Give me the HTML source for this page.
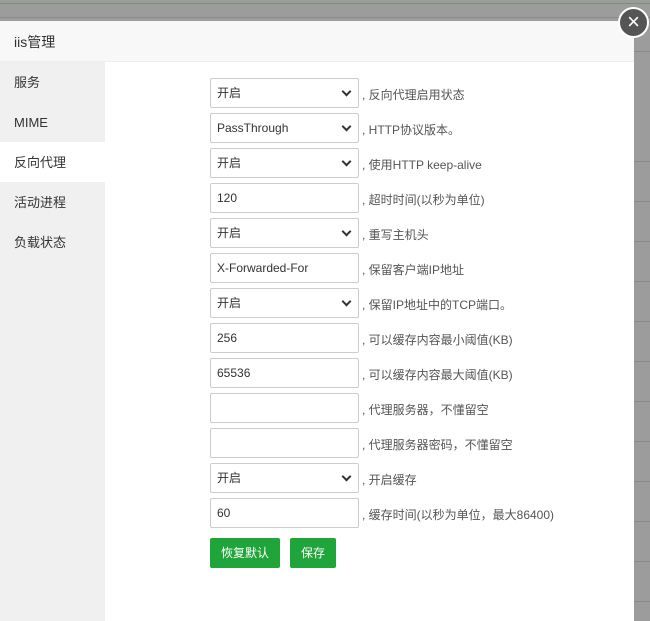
<!DOCTYPE html>
<html><head><meta charset="utf-8"><style>
*{box-sizing:border-box;margin:0;padding:0}
body{width:650px;height:613px;overflow:hidden;background:#9c9c9c;font-family:"Liberation Sans","Noto Sans CJK SC",sans-serif;font-size:12px;color:#333;position:relative}
.ln{position:absolute;left:0;right:0;height:1px;background:#8a8a8a}
.dlg{position:absolute;left:0;top:21px;width:634px;height:600px;background:#fff}
.hd{height:41px;background:#f8f8f8;border-bottom:1px solid #eee;font-size:14px;line-height:42px;padding-left:14px;color:#333}
.sb{position:absolute;left:0;top:41px;width:105px;bottom:0;background:#f0f0f0}
.sb div{height:40px;line-height:42px;padding-left:14px;font-size:13px;color:#333}
.sb .on{background:#fff}
.row{position:absolute;left:210px;height:30px;display:flex;align-items:center}
.f{width:149px;height:30px;border:1px solid #ccc;border-radius:2px;padding-left:6px;line-height:29px;font-size:12px;position:relative;color:#333;background:#fff}
.f.s:after{content:"";position:absolute;right:8px;top:9px;width:5px;height:5px;border-right:2px solid #333;border-bottom:2px solid #333;transform:rotate(45deg)}
.l{margin-left:3px;font-size:12px;color:#555;padding-top:2px}
.btn{position:absolute;top:538px;height:30px;background:#20a53a;color:#fff;border-radius:2px;line-height:30px;text-align:center;font-size:12px}
.x{position:absolute;left:618px;top:7px;width:31px;height:31px;border-radius:50%;background:#555;border:2px solid #fff;color:#fff;text-align:center;line-height:26px;font-size:22px}
</style></head><body>
<div class="ln" style="top:3px;background:#7d8f7a"></div>
<div class="ln" style="top:17px"></div>
<div class="dlg"><div class="hd">iis管理</div>
<div class="sb"><div>服务</div><div>MIME</div><div class="on">反向代理</div><div>活动进程</div><div>负载状态</div></div></div>
<div class="ln" style="top:51px;left:634px"></div>
<div class="ln" style="top:161px;left:634px"></div>
<div class="ln" style="top:201px;left:634px"></div>
<div class="ln" style="top:241px;left:634px"></div>
<div class="ln" style="top:281px;left:634px"></div>
<div class="ln" style="top:321px;left:634px"></div>
<div class="ln" style="top:361px;left:634px"></div>
<div class="ln" style="top:401px;left:634px"></div>
<div class="ln" style="top:441px;left:634px"></div>
<div class="ln" style="top:481px;left:634px"></div>
<div class="ln" style="top:521px;left:634px"></div>
<div class="ln" style="top:561px;left:634px"></div>
<div class="ln" style="top:601px;left:634px"></div>
<div class="row" style="top:78px"><div class="f s">开启</div><span class="l">, 反向代理启用状态</span></div>
<div class="row" style="top:113px"><div class="f s">PassThrough</div><span class="l">, HTTP协议版本。</span></div>
<div class="row" style="top:148px"><div class="f s">开启</div><span class="l">, 使用HTTP keep-alive</span></div>
<div class="row" style="top:183px"><div class="f">120</div><span class="l">, 超时时间(以秒为单位)</span></div>
<div class="row" style="top:218px"><div class="f s">开启</div><span class="l">, 重写主机头</span></div>
<div class="row" style="top:253px"><div class="f">X-Forwarded-For</div><span class="l">, 保留客户端IP地址</span></div>
<div class="row" style="top:288px"><div class="f s">开启</div><span class="l">, 保留IP地址中的TCP端口。</span></div>
<div class="row" style="top:323px"><div class="f">256</div><span class="l">, 可以缓存内容最小阈值(KB)</span></div>
<div class="row" style="top:358px"><div class="f">65536</div><span class="l">, 可以缓存内容最大阈值(KB)</span></div>
<div class="row" style="top:393px"><div class="f"></div><span class="l">, 代理服务器，不懂留空</span></div>
<div class="row" style="top:428px"><div class="f"></div><span class="l">, 代理服务器密码，不懂留空</span></div>
<div class="row" style="top:463px"><div class="f s">开启</div><span class="l">, 开启缓存</span></div>
<div class="row" style="top:498px"><div class="f">60</div><span class="l">, 缓存时间(以秒为单位，最大86400)</span></div>
<div class="btn" style="left:210px;width:70px">恢复默认</div>
<div class="btn" style="left:290px;width:46px">保存</div>
<div class="x">×</div>
</body></html>
